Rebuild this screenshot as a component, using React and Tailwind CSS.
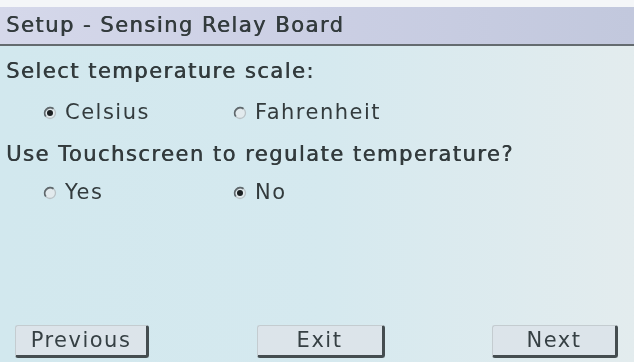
import { useState } from 'react';

const font = { fontFamily: '"DejaVu Sans", Verdana, sans-serif' };

function Radio({ checked }) {
  return (
    <svg width="14" height="14" viewBox="0 0 14 14" className="shrink-0">
      <circle cx="7" cy="7" r="5.5" fill="#e2eaed" stroke="#b9c2c6" strokeWidth="1.3" />
      <path d="M10.5 2.8 A5.5 5.5 0 0 0 2.8 10.5" fill="none" stroke="#5f686c" strokeWidth="1.8" />
      {checked && <circle cx="7" cy="7" r="3" fill="#1b2022" />}
    </svg>
  );
}

function Option({ label, checked, onClick, className }) {
  return (
    <button onClick={onClick} className={`flex items-center gap-[8px] ${className}`}>
      <Radio checked={checked} />
      <span>{label}</span>
    </button>
  );
}

function PanelButton({ label, className }) {
  return (
    <button className={`h-[33px] flex items-center justify-center rounded-[3px] bg-[#dce4ea] border-l border-t border-[#c4ccd0] border-r-[3px] border-b-[3px] border-r-[#454d50] border-b-[#454d50] text-[#364044] ${className}`}>
      {label}
    </button>
  );
}

export default function App() {
  const [scale, setScale] = useState('celsius');
  const [regulate, setRegulate] = useState('no');

  return (
    <div style={font} className="w-[634px] h-[362px] flex flex-col bg-[#f4f6f8] text-[21px] tracking-[1.5px] text-[#333b3d] [text-shadow:0.6px_0_0_#333b3d] overflow-hidden blur-[0.6px]">
      <div className="h-[7px]" />
      <div className="h-[39px] flex items-center px-[6px] bg-gradient-to-r from-[#d5d8ea] via-[#cbcfe4] to-[#c2c8dd] border-b-2 border-[#646b6f]">
        Setup - Sensing Relay Board
      </div>
      <div className="flex-1 flex flex-col bg-gradient-to-r from-[#d2e8ee] via-[#d5e9ef] to-[#e3ecee] pt-[6px] pb-[4px]">
        <div className="h-[40px] flex items-center px-[6px]">Select temperature scale:</div>
        <div className="h-[42px] flex items-center pl-[43px]">
          <Option label="Celsius" checked={scale === 'celsius'} onClick={() => setScale('celsius')} className="w-[190px]" />
          <Option label="Fahrenheit" checked={scale === 'fahrenheit'} onClick={() => setScale('fahrenheit')} />
        </div>
        <div className="h-[42px] flex items-center px-[6px]">Use Touchscreen to regulate temperature?</div>
        <div className="h-[34px] flex items-center pl-[43px]">
          <Option label="Yes" checked={regulate === 'yes'} onClick={() => setRegulate('yes')} className="w-[190px]" />
          <Option label="No" checked={regulate === 'no'} onClick={() => setRegulate('no')} />
        </div>
        <div className="flex-1" />
        <div className="flex items-center justify-between pl-[15px] pr-[16px]">
          <PanelButton label="Previous" className="w-[134px]" />
          <PanelButton label="Exit" className="w-[128px]" />
          <PanelButton label="Next" className="w-[126px]" />
        </div>
      </div>
    </div>
  );
}
